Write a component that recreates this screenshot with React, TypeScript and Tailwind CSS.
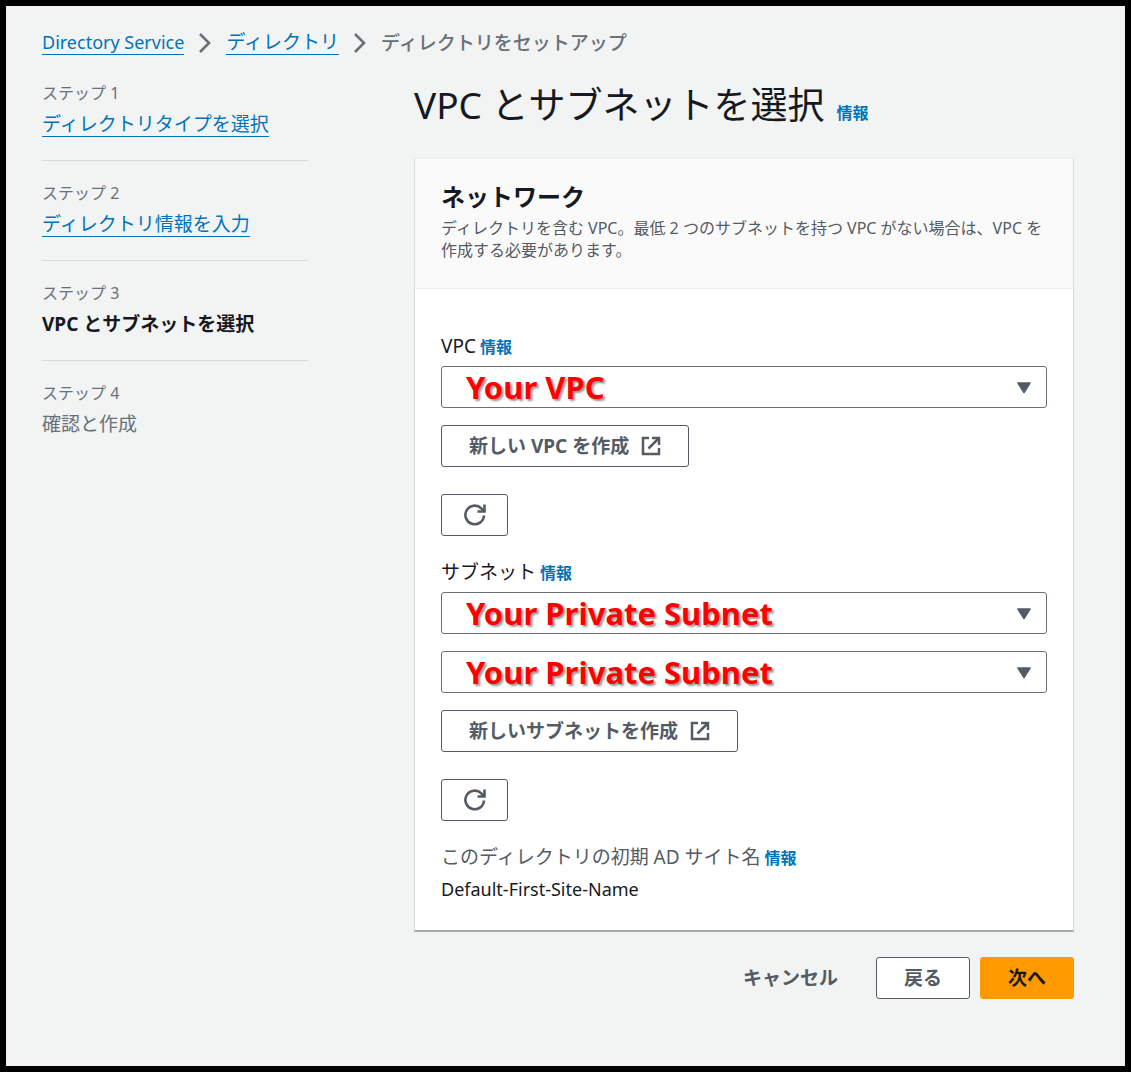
import type { ReactNode } from "react";

type Step = {
  label: string;
  title: string;
  state: "done" | "current" | "upcoming";
};

const steps: Step[] = [
  { label: "ステップ 1", title: "ディレクトリタイプを選択", state: "done" },
  { label: "ステップ 2", title: "ディレクトリ情報を入力", state: "done" },
  { label: "ステップ 3", title: "VPC とサブネットを選択", state: "current" },
  { label: "ステップ 4", title: "確認と作成", state: "upcoming" },
];

function ChevronIcon() {
  return (
    <svg width="14" height="20" viewBox="0 0 14 20" fill="none" aria-hidden="true">
      <path d="M2 1l9 9-9 9" stroke="#687078" strokeWidth="2.6" />
    </svg>
  );
}

function ExternalIcon() {
  return (
    <svg width="20" height="20" viewBox="0 0 20 20" fill="none" stroke="#545b64" strokeWidth="2.5" aria-hidden="true">
      <path d="M8 2H2v16h16v-6" />
      <path d="M11 2h7v7" />
      <path d="M18 2L7.5 12.5" />
    </svg>
  );
}

function RefreshIcon() {
  return (
    <svg width="24" height="24" viewBox="0 0 24 24" fill="none" stroke="#545b64" strokeWidth="2.6" aria-hidden="true">
      <path d="M21 12.5a9.3 9.3 0 1 1-2.7-7.1L20 7" />
      <path d="M21.5 1.5v7H14.5" />
      <path d="M21.5 4.5v4h-4z" fill="#545b64" stroke="none" />
    </svg>
  );
}

function InfoLink() {
  return (
    <a href="#info" className="text-base font-bold text-[#0073bb]">
      情報
    </a>
  );
}

function SelectBox({ id, label, value }: { id: string; label?: string; value: string }) {
  return (
    <div className="relative">
      <select
        id={id}
        aria-label={label}
        className="block h-[42px] w-full appearance-none rounded-[3px] border border-[#687078] bg-white pl-6 pr-12 font-['Noto_Sans'] text-[31px] leading-10 font-bold text-[#ff0000] [text-shadow:2px_2px_2px_rgba(0,0,0,0.4)]"
      >
        <option>{value}</option>
      </select>
      <svg
        className="pointer-events-none absolute top-4 right-4"
        width="14"
        height="12"
        viewBox="0 0 14 12"
        aria-hidden="true"
      >
        <path d="M1 1h12L7 10.5z" fill="#545b64" stroke="#545b64" strokeWidth="1.5" strokeLinejoin="round" />
      </svg>
    </div>
  );
}

function OutlineButton({ children, label }: { children: ReactNode; label?: string }) {
  return (
    <button
      type="button"
      aria-label={label}
      className="flex h-[42px] items-center gap-3 rounded-[3px] border border-[#545b64] bg-white px-[27px] font-bold text-[#545b64]"
    >
      {children}
    </button>
  );
}

function RefreshButton({ label }: { label: string }) {
  return (
    <button
      type="button"
      aria-label={label}
      className="mt-[27px] flex h-[42px] w-[67px] items-center justify-center rounded-[3px] border border-[#545b64] bg-white"
    >
      <RefreshIcon />
    </button>
  );
}

function StepItem({ step }: { step: Step }) {
  return (
    <li className="mb-[22px] border-b border-[#d5dbdb] pb-[22px] last:border-0">
      <div className="text-base leading-5 text-[#687078]">{step.label}</div>
      <div className="mt-[9px] h-[26px] leading-6">
        {step.state === "done" && (
          <a href="#step" className="inline-block border-b border-[#0073bb] text-[#0073bb]">
            {step.title}
          </a>
        )}
        {step.state === "current" && <span className="font-bold text-[#16191f]">{step.title}</span>}
        {step.state === "upcoming" && <span className="text-[#687078]">{step.title}</span>}
      </div>
    </li>
  );
}

export default function App() {
  return (
    <div
      lang="ja"
      className="min-h-screen border-6 border-black bg-[#f2f3f3] pt-6 pr-[51px] pb-16 pl-9 font-['Noto_Sans','Noto_Sans_CJK_JP',sans-serif] text-[19px] leading-6 text-[#16191f]"
    >
      <nav aria-label="breadcrumb" className="flex items-center gap-3.5">
        <a href="#service" className="border-b border-[#0073bb] text-lg leading-6 text-[#0073bb]">
          Directory Service
        </a>
        <ChevronIcon />
        <a href="#directories" className="border-b border-[#0073bb] text-[#0073bb]">
          ディレクトリ
        </a>
        <ChevronIcon />
        <span className="font-medium text-[#687078]">ディレクトリをセットアップ</span>
      </nav>

      <div className="flex gap-[106px]">
        <ol className="mt-7 w-[266px] shrink-0">
          {steps.map((step) => (
            <StepItem key={step.label} step={step} />
          ))}
        </ol>

        <main className="mt-[26px] min-w-0 flex-1">
          <div className="flex items-baseline gap-3">
            <h1 className="text-[37px] leading-[48px]">VPC とサブネットを選択</h1>
            <InfoLink />
          </div>

          <section className="mt-[29px] border border-[#d5dbdb] border-t-[#eaeded] border-b-2 border-b-[#a2adad] bg-white">
            <header className="border-b border-[#eaeded] bg-[#fafafa] px-[26px] pt-[22px] pb-[27px]">
              <h2 className="text-2xl leading-8 font-bold">ネットワーク</h2>
              <p className="mt-1 text-base leading-[22px] text-[#545b64]">
                ディレクトリを含む VPC。最低 2 つのサブネットを持つ VPC がない場合は、VPC を作成する必要があります。
              </p>
            </header>

            <div className="px-[26px] pt-[45px] pb-[29px]">
              <div className="mb-[7px] flex items-baseline gap-1">
                <label htmlFor="vpc">VPC</label>
                <InfoLink />
              </div>
              <SelectBox id="vpc" value="Your VPC" />
              <div className="mt-[17px] flex">
                <OutlineButton>
                  新しい VPC を作成
                  <ExternalIcon />
                </OutlineButton>
              </div>
              <RefreshButton label="VPC を更新" />

              <div className="mt-6 mb-[7px] flex items-baseline gap-1">
                <label htmlFor="subnet-1">サブネット</label>
                <InfoLink />
              </div>
              <div className="flex flex-col gap-[17px]">
                <SelectBox id="subnet-1" value="Your Private Subnet" />
                <SelectBox id="subnet-2" label="サブネット 2" value="Your Private Subnet" />
              </div>
              <div className="mt-[17px] flex">
                <OutlineButton>
                  新しいサブネットを作成
                  <ExternalIcon />
                </OutlineButton>
              </div>
              <RefreshButton label="サブネットを更新" />

              <div className="mt-6 flex items-baseline gap-1 text-[#545b64]">
                <span>このディレクトリの初期 AD サイト名</span>
                <InfoLink />
              </div>
              <div className="mt-[7px] text-lg leading-6">Default-First-Site-Name</div>
            </div>
          </section>

          <div className="mt-[25px] flex justify-end gap-2.5">
            <button type="button" className="h-[42px] px-7 font-bold text-[#545b64]">
              キャンセル
            </button>
            <OutlineButton>戻る</OutlineButton>
            <button type="button" className="h-[42px] rounded-[3px] bg-[#ff9900] px-7 font-bold text-[#16191f]">
              次へ
            </button>
          </div>
        </main>
      </div>
    </div>
  );
}
